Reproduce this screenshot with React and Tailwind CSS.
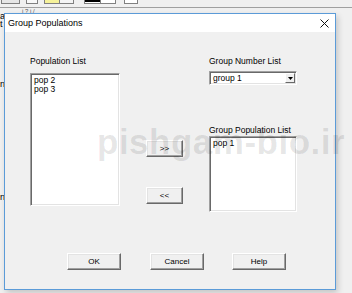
import React from "react";

/* ---------------- 3D PIECES ---------------- */
function Sunken({ className = "", children }) {
  return (
    <div
      className={`border border-t-[#a0a0a0] border-l-[#a0a0a0] border-r-white border-b-white bg-white shadow-[inset_1px_1px_0_#696969,inset_-1px_-1px_0_#e3e3e3] ${className}`}
    >
      {children}
    </div>
  );
}

function Btn({ className = "", children }) {
  return (
    <div
      className={`flex items-center justify-center border border-t-white border-l-white border-r-[#696969] border-b-[#696969] bg-[#f0f0f0] shadow-[inset_-1px_-1px_0_#a0a0a0,inset_1px_1px_0_#e3e3e3] text-[8px] leading-none text-black ${className}`}
    >
      {children}
    </div>
  );
}

function ListBox({ items, className = "" }) {
  return (
    <Sunken className={`px-[3px] pt-[2px] ${className}`}>
      {items.map((it) => (
        <div key={it} className="text-[8.5px] leading-[9px] text-black">
          {it}
        </div>
      ))}
    </Sunken>
  );
}

export default function App() {
  return (
    <div className="relative h-[293px] w-[352px] overflow-hidden bg-[#f0f0f0] font-['Liberation_Sans',Arial,sans-serif]">
      {/* PARENT WINDOW TOOLBAR (behind the dialog) */}
      <div className="flex h-[8px] items-start gap-[6px] border-b border-[#a0a0a0] bg-[#f0f0f0] pl-[1px]">
        <div className="h-[4px] w-[19px] border border-t-0 border-[#808080] bg-[#e6e6e6]" />
        <div className="h-[4px] w-[12px] border border-t-0 border-[#808080] bg-[#f8f8f8]" />
        <div className="flex h-[4px] w-[30px] border border-t-0 border-[#808080]">
          <div className="w-[14px] bg-[#f6f29a]" />
          <div className="flex-1 border-l border-[#808080] bg-[#f4f4f4]" />
        </div>
        <div className="ml-[4px] flex h-[4px] w-[32px] border border-t-0 border-[#808080]">
          <div className="w-[15px] border-t-2 border-black bg-white" />
          <div className="flex-1 border-l border-[#808080] bg-white" />
        </div>
        <div className="ml-[2px] h-[4px] w-[14px] border border-t-0 border-[#808080] bg-white" />
      </div>

      {/* text fragments of the parent window */}
      <span className="absolute left-0 top-[12px] text-[9px] leading-none text-black">a</span>
      <span className="absolute left-0 top-[20px] text-[9px] leading-none text-black">t</span>
      <span className="absolute left-[22px] top-[8px] text-[6px] leading-none text-[#555]">i ? i /</span>
      <span className="absolute left-0 top-[80px] text-[9px] leading-none text-black">n</span>
      <span className="absolute left-0 top-[193px] text-[9px] leading-none text-black">n</span>

      {/* DIALOG */}
      <div className="absolute left-[4px] top-[13px] flex h-[277px] w-[332px] flex-col border border-[#5b9bd8] bg-[#f0f0f0] shadow-[2px_3px_6px_rgba(0,0,0,0.18)]">
        {/* title bar */}
        <div className="flex h-[18px] items-center justify-between bg-white pl-[3px] pr-[6px]">
          <span className="text-[9px] leading-none text-black">Group Populations</span>
          <svg width="9" height="9" viewBox="0 0 9 9">
            <path d="M0.5 0.5 L8.5 8.5 M8.5 0.5 L0.5 8.5" stroke="#111" strokeWidth="1" />
          </svg>
        </div>

        {/* body */}
        <div className="flex flex-col pl-[25px] pt-[24px]">
          <div className="flex items-start">
            {/* left column */}
            <div className="flex w-[90px] flex-col">
              <span className="h-[10px] text-[8.5px] leading-[10px] text-black">Population List</span>
              <ListBox items={["pop 2", "pop 3"]} className="mt-[7px] h-[133px]" />
            </div>

            {/* middle column */}
            <div className="ml-[26px] flex w-[37px] flex-col pt-[84px]">
              <Btn className="h-[17px]">&gt;&gt;</Btn>
              <Btn className="mt-[30px] h-[17px]">&lt;&lt;</Btn>
            </div>

            {/* right column */}
            <div className="ml-[26px] flex w-[88px] flex-col">
              <span className="h-[10px] text-[8.5px] leading-[10px] text-black">Group Number List</span>
              <Sunken className="mt-[5px] flex h-[14px] items-center justify-between pl-[3px] pr-[1px]">
                <span className="text-[8.5px] leading-none text-black">group 1</span>
                <div className="flex h-[10px] w-[10px] items-center justify-center border border-t-white border-l-white border-r-[#696969] border-b-[#696969] bg-[#f0f0f0]">
                  <svg width="5" height="3" viewBox="0 0 5 3">
                    <path d="M0 0 H5 L2.5 3 Z" fill="#000" />
                  </svg>
                </div>
              </Sunken>
              <span className="mt-[40px] h-[10px] text-[8.5px] leading-[10px] text-black">
                Group Population List
              </span>
              <ListBox items={["pop 1"]} className="mt-[1px] h-[76px]" />
            </div>
          </div>

          {/* bottom buttons */}
          <div className="ml-[37px] mt-[41px] flex">
            <Btn className="h-[17px] w-[54px]">OK</Btn>
            <Btn className="ml-[29px] h-[17px] w-[54px]">Cancel</Btn>
            <Btn className="ml-[28px] h-[17px] w-[54px]">Help</Btn>
          </div>
        </div>
      </div>

      {/* WATERMARK */}
      <span className="pointer-events-none absolute left-[97px] top-[124px] whitespace-nowrap text-[35px] font-bold leading-none tracking-[0.5px] text-black/10">
        pishgam-bio.ir
      </span>
    </div>
  );
}
